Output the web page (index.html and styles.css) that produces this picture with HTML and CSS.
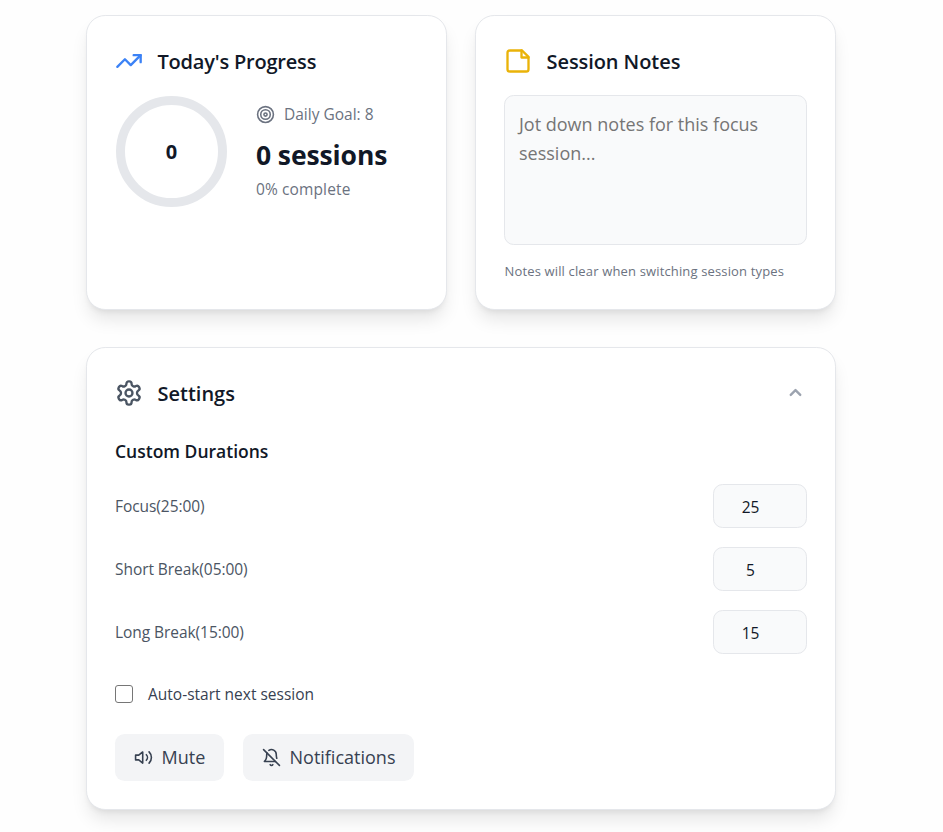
FILE: index.html
```html
<!DOCTYPE html>
<html lang="en">
<head>
<meta charset="utf-8">
<title>Focus Timer</title>
<link rel="stylesheet" href="styles.css">
</head>
<body>
<main class="page">
  <div class="columns">
    <section class="card">
      <header class="card-head">
        <svg class="icon icon-lg blue" viewBox="0 0 24 24"><path d="M16 7h6v6"/><path d="m22 7-8.500 8.500-5-5L2 17"/></svg>
        <h2 class="title t-progress">Today's Progress</h2>
      </header>
      <div class="progress">
        <div class="ring"><span>0</span></div>
        <div class="stats">
          <div class="goal">
            <svg class="icon icon-sm" viewBox="0 0 24 24"><circle cx="12" cy="12" r="10"/><circle cx="12" cy="12" r="6"/><circle cx="12" cy="12" r="2"/></svg>
            <span>Daily Goal: 8</span>
          </div>
          <div class="count">0 sessions</div>
          <div class="complete">0% complete</div>
        </div>
      </div>
    </section>
    <section class="card">
      <header class="card-head">
        <svg class="icon icon-lg yellow" viewBox="0 0 24 24"><path d="M15.500 3H5a2 2 0 0 0-2 2v14c0 1.100.9 2 2 2h14a2 2 0 0 0 2-2V8.500L15.500 3Z"/><path d="M15 3v6h6"/></svg>
        <h2 class="title">Session Notes</h2>
      </header>
      <textarea class="notes" placeholder="Jot down notes for this focus session..."></textarea>
      <p class="hint">Notes will clear when switching session types</p>
    </section>
  </div>

  <section class="card settings">
    <header class="card-head settings-head">
      <svg class="icon icon-lg gray" viewBox="0 0 24 24"><path d="M12.220 2h-.44a2 2 0 0 0-2 2v.18a2 2 0 0 1-1 1.730l-.43.25a2 2 0 0 1-2 0l-.15-.08a2 2 0 0 0-2.730.73l-.22.38a2 2 0 0 0 .73 2.730l.15.1a2 2 0 0 1 1 1.720v.51a2 2 0 0 1-1 1.740l-.15.09a2 2 0 0 0-.73 2.730l.22.38a2 2 0 0 0 2.730.73l.15-.08a2 2 0 0 1 2 0l.43.25a2 2 0 0 1 1 1.730V20a2 2 0 0 0 2 2h.44a2 2 0 0 0 2-2v-.18a2 2 0 0 1 1-1.730l.43-.25a2 2 0 0 1 2 0l.15.08a2 2 0 0 0 2.730-.73l.22-.39a2 2 0 0 0-.73-2.730l-.15-.08a2 2 0 0 1-1-1.740v-.5a2 2 0 0 1 1-1.740l.15-.09a2 2 0 0 0 .73-2.730l-.22-.38a2 2 0 0 0-2.730-.73l-.15.08a2 2 0 0 1-2 0l-.43-.25a2 2 0 0 1-1-1.730V4a2 2 0 0 0-2-2z"/><circle cx="12" cy="12" r="3"/></svg>
      <h2 class="title t-settings">Settings</h2>
      <svg class="icon chevron" viewBox="0 0 24 24"><path d="m18 15-6-6-6 6"/></svg>
    </header>
    <h3 class="subtitle">Custom Durations</h3>
    <div class="durations">
      <label class="row"><span>Focus(25:00)</span><input class="num" type="text" value="25"></label>
      <label class="row"><span>Short Break(05:00)</span><input class="num" type="text" value="5"></label>
      <label class="row"><span>Long Break(15:00)</span><input class="num" type="text" value="15"></label>
    </div>
    <label class="auto"><input class="check" type="checkbox"><span>Auto-start next session</span></label>
    <div class="actions">
      <button class="btn mute"><svg class="icon icon-sm" viewBox="0 0 24 24"><path d="M11 5 6 9H2v6h4l5 4V5z"/><path d="M15.540 8.460a5 5 0 0 1 0 7.070"/><path d="M19.070 4.930a10 10 0 0 1 0 14.140"/></svg><span>Mute</span></button>
      <button class="btn notif"><svg class="icon icon-sm" viewBox="0 0 24 24"><path d="M8.700 3A6 6 0 0 1 18 8a21.300 21.300 0 0 0 .6 5"/><path d="M17 17H3s3-2 3-9a4.670 4.670 0 0 1 .3-1.700"/><path d="M10.300 21a1.940 1.940 0 0 0 3.400 0"/><path d="m2 2 20 20"/></svg><span>Notifications</span></button>
    </div>
  </section>
</main>
</body>
</html>
```
FILE: styles.css
```css
* { box-sizing: border-box; }

body {
  margin: 0;
  height: 832px;
  overflow: hidden;
  background: #fefefe;
  color: #111827;
  font-family: "Open Sans", "Noto Sans", sans-serif;
  font-size: 18px;
  line-height: 28.800px;
}

h2, h3, p { margin: 0; }

.page {
  width: 750px;
  margin-left: 86px;
  padding-top: 15px;
}

.columns {
  display: grid;
  grid-template-columns: 1fr 1fr;
  gap: 28px;
  margin-bottom: 37px;
}

.card {
  height: 295px;
  padding: 28px;
  background: #fff;
  border: 1px solid #e5e7eb;
  border-radius: 19.200px;
  box-shadow: 0 12px 18px -3.600px rgba(0, 0, 0, 0.1), 0 4.800px 7.200px -4.800px rgba(0, 0, 0, 0.1);
}

.card-head {
  display: flex;
  align-items: center;
  height: 34px;
  gap: 14.500px;
  margin-bottom: 17px;
}

.icon {
  flex: none;
  fill: none;
  stroke: currentColor;
  stroke-width: 2;
  stroke-linecap: round;
  stroke-linejoin: round;
}
.icon-lg { width: 28px; height: 28px; }
.icon-sm { width: 19px; height: 19px; }
.blue { color: #3b82f6; }
.yellow { color: #eab308; }
.gray { color: #4b5563; }

.title {
  padding-top: 2px;
  font-size: 20px;
  font-weight: 600;
  letter-spacing: -0.070px;
  white-space: nowrap;
}
.t-progress { letter-spacing: -0.200px; }
.t-settings { letter-spacing: 0; }

.progress { display: flex; gap: 29px; padding-left: 1px; }
.ring {
  display: grid;
  place-items: center;
  width: 111px;
  height: 111px;
  margin-top: 1px;
  border: 9.500px solid #e5e7eb;
  border-radius: 50%;
  font-size: 20px;
  font-weight: 700;
}
.ring span { padding-top: 2px; }
.stats { padding-top: 5px; color: #6b7280; font-size: 15.500px; white-space: nowrap; }
.goal { display: flex; align-items: center; gap: 9px; height: 29px; }
.count {
  margin-top: 8px;
  height: 36px;
  color: #111827;
  font-size: 26.500px;
  font-weight: 700;
  letter-spacing: -0.100px;
  line-height: 36px;
}
.complete { height: 24px; margin-top: 4px; letter-spacing: 0.120px; line-height: 24px; }

.notes {
  display: block;
  width: 303px;
  height: 150px;
  padding: 14px;
  border: 1px solid #e5e7eb;
  border-radius: 9.600px;
  background: #f9fafb;
  font: 18px/28.800px "Open Sans", sans-serif;
  resize: none;
}
.notes::placeholder { color: #757575; opacity: 1; }
.hint { margin-top: 16px; padding-left: 0.500px; color: #6b7280; font-size: 13px; letter-spacing: 0.150px; line-height: 20px; white-space: nowrap; }

.settings { height: 463px; }
.settings-head { margin-bottom: 26px; }
.chevron { width: 19px; height: 19px; margin: -1px 2.500px 0 auto; color: #9ca3af; stroke-width: 3; }

.subtitle { height: 29px; font-size: 17.500px; font-weight: 600; line-height: 31px; }
.durations { display: grid; gap: 19px; margin-top: 19px; }
.row { display: flex; align-items: center; justify-content: space-between; height: 44px; color: #4b5563; font-size: 15.500px; letter-spacing: -0.060px; }
.row span { padding-top: 1px; }
.num {
  width: 94px;
  height: 44px;
  padding: 1px 28px 0 9px;
  border: 1px solid #e5e7eb;
  border-radius: 9.600px;
  background: #f9fafb;
  color: #111827;
  font: 15.500px "Open Sans", sans-serif;
  text-align: center;
}
.auto { display: flex; align-items: center; gap: 15px; height: 24px; margin-top: 28px; color: #374151; font-size: 15.500px; }
.check {
  appearance: none;
  width: 18px;
  height: 18px;
  margin: 0;
  border: 1.500px solid #767676;
  border-radius: 3px;
  background: #fff;
}
.actions { display: flex; gap: 19px; margin-top: 28px; }
.btn {
  display: flex;
  align-items: center;
  justify-content: center;
  gap: 9px;
  height: 47px;
  padding: 0;
  border: 0;
  border-radius: 9.600px;
  background: #f3f4f6;
  color: #374151;
  font: 18px "Open Sans", sans-serif;
}
.btn span { padding-bottom: 2px; }
.mute { width: 109px; }
.notif { width: 171px; }
```
